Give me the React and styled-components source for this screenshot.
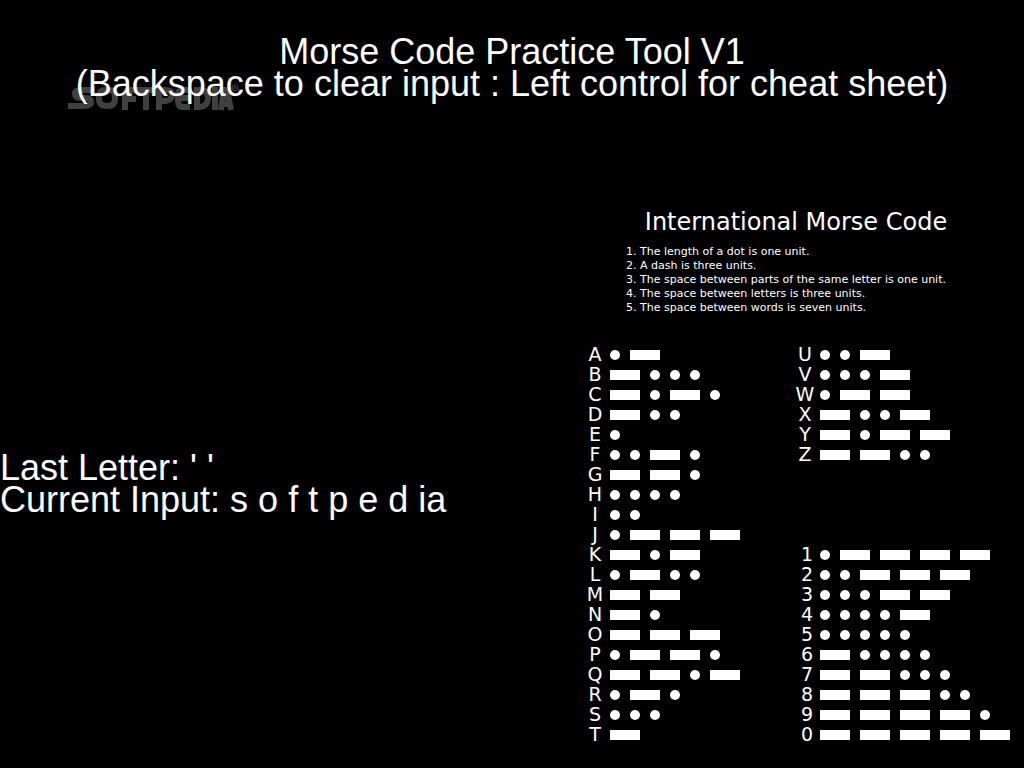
import React from "react";
import styled, { createGlobalStyle } from "styled-components";

const GlobalStyle = createGlobalStyle`
  * { box-sizing: border-box; }
  body { margin: 0; background: #000; color: #fff; }
`;

const Page = styled.div`
  position: relative;
  min-height: 100vh;
  display: flex;
  flex-direction: column;
  background: #000;
  font-family: "Liberation Sans", Arial, sans-serif;
  font-size: 36px;
  line-height: 32px;
`;

const Header = styled.header`
  position: relative;
  padding-top: 36px;
  text-align: center;
`;

const Title = styled.h1`
  margin: 0;
  font-size: inherit;
  font-weight: 400;
`;

const Hint = styled.p`
  margin: 0;
`;

const Watermark = styled.svg`
  position: absolute;
  left: 68px;
  top: 84px;
  width: 172px;
  height: 27px;
`;

const Main = styled.main`
  display: grid;
  grid-template-columns: minmax(0, 1fr) 444px;
  padding-top: 104px;
`;

const Status = styled.section`
  padding-top: 248px;
`;

const StatusLine = styled.p`
  margin: 0;
  white-space: nowrap;
`;

const Sheet = styled.section`
  font-family: "DejaVu Sans", sans-serif;
`;

const SheetTitle = styled.h2`
  margin: 0 12px 0 0;
  text-align: center;
  font-size: 24px;
  line-height: 36px;
  font-weight: 400;
`;

const Rules = styled.ol`
  margin: 5px 0 30px;
  padding: 0 0 0 60px;
  font-size: 11px;
  line-height: 14px;
  list-style-position: outside;
`;

const Charts = styled.div`
  display: flex;
  gap: 50px;
`;

const ChartColumn = styled.div`
  display: flex;
  flex-direction: column;
  justify-content: space-between;
`;

const Chart = styled.table`
  border-collapse: collapse;
  font-size: 19px;
  line-height: 18px;
`;

const Symbol = styled.th`
  width: 30px;
  height: 20px;
  padding: 0 0 0 ${(p) => (p.$digit ? 4 : 0)}px;
  font-weight: 400;
  text-align: center;
  vertical-align: top;
`;

const Code = styled.td`
  height: 20px;
  padding: 0;
`;

const Signals = styled.div`
  display: flex;
  gap: 10px;
`;

const Signal = styled.span`
  width: ${(p) => (p.$dash ? 30 : 10)}px;
  height: 10px;
  border-radius: ${(p) => (p.$dash ? 0 : "50%")};
  background: #fff;
`;

const FIRST = [
  ["A", ".-"], ["B", "-..."], ["C", "-.-."], ["D", "-.."], ["E", "."],
  ["F", "..-."], ["G", "--."], ["H", "...."], ["I", ".."], ["J", ".---"],
  ["K", "-.-"], ["L", ".-.."], ["M", "--"], ["N", "-."], ["O", "---"],
  ["P", ".--."], ["Q", "--.-"], ["R", ".-."], ["S", "..."], ["T", "-"],
];
const SECOND = [
  ["U", "..-"], ["V", "...-"], ["W", ".--"], ["X", "-..-"], ["Y", "-.--"], ["Z", "--.."],
];
const DIGITS = [
  ["1", ".----"], ["2", "..---"], ["3", "...--"], ["4", "....-"], ["5", "....."],
  ["6", "-...."], ["7", "--..."], ["8", "---.."], ["9", "----."], ["0", "-----"],
];

function MorseTable({ rows, label, digits = false }) {
  return (
    <Chart aria-label={label}>
      <tbody>
        {rows.map(([symbol, code]) => (
          <tr key={symbol}>
            <Symbol scope="row" $digit={digits}>{symbol}</Symbol>
            <Code>
              <Signals>
                {[...code].map((c, i) => <Signal key={i} $dash={c === "-"} />)}
              </Signals>
            </Code>
          </tr>
        ))}
      </tbody>
    </Chart>
  );
}

function Logo() {
  return (
    <Watermark viewBox="0 0 172 27" aria-hidden="true">
      <g fill="none" stroke="#404040" strokeWidth="6">
        <path d="M27 6H13Q7 6 7 10T13 14H17Q23 14 23 18T16 22H0" />
        <path d="M38 6H41Q47 6 47 12V15Q47 22 39 22T31 15V12Q31 6 38 6Z" />
        <path d="M57 26V11Q57 6 62 6H70M56 15H68" />
        <path d="M68 6H87M78 5V26" />
        <path d="M91 26V6H98Q104 6 104 11T98 17H92" />
        <path d="M122 6H115Q110 6 110 11V17Q110 23 115 23H122M110 14H121" />
        <path d="M129 6H132Q140 6 140 14T132 23H129Z" />
        <path d="M147 3V26" />
        <path d="M153 26L156 6H159L163 26M154 20H162" />
      </g>
      <g fill="none" stroke="#404040">
        <circle cx="167" cy="4" r="3" />
        <path d="M166 6V3H168V5" />
      </g>
    </Watermark>
  );
}

export default function App() {
  return (
    <>
      <GlobalStyle />
      <Page>
        <Logo />
        <Header>
          <Title>Morse Code Practice Tool V1</Title>
          <Hint>(Backspace to clear input : Left control for cheat sheet)</Hint>
        </Header>
        <Main>
          <Status>
            <StatusLine>Last Letter: ' '</StatusLine>
            <StatusLine>Current Input: s o f t p e d ia</StatusLine>
          </Status>
          <Sheet>
            <SheetTitle>International Morse Code</SheetTitle>
            <Rules>
              <li>The length of a dot is one unit.</li>
              <li>A dash is three units.</li>
              <li>The space between parts of the same letter is one unit.</li>
              <li>The space between letters is three units.</li>
              <li>The space between words is seven units.</li>
            </Rules>
            <Charts>
              <MorseTable rows={FIRST} label="Letters A to T" />
              <ChartColumn>
                <MorseTable rows={SECOND} label="Letters U to Z" />
                <MorseTable rows={DIGITS} label="Digits" digits />
              </ChartColumn>
            </Charts>
          </Sheet>
        </Main>
      </Page>
    </>
  );
}
